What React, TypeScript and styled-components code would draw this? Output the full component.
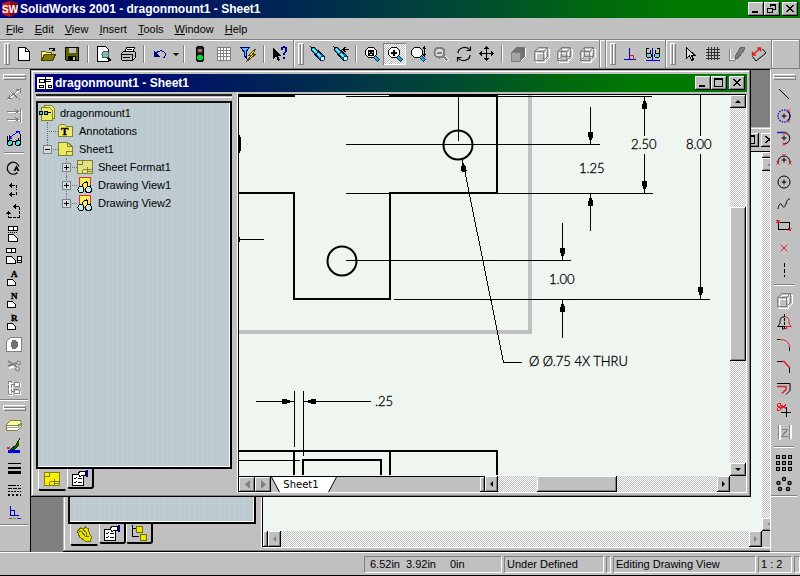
import React from "react";
import type { ReactNode } from "react";
import styled, { createGlobalStyle, css } from "styled-components";

const face = "#c0c0c0";
const paper = "#eff6f0";
const uiFont = `"Liberation Sans", Arial, sans-serif`;

const GlobalStyle = createGlobalStyle`
  *, *::before, *::after { box-sizing: border-box; }
  body { margin: 0; background: ${face}; color: #000; font: 11px/18px ${uiFont}; overflow: hidden; }
  button { font: inherit; color: inherit; padding: 0; margin: 0; border: 0; background: none; border-radius: 0; }
  svg { display: block; flex: none; }
`;

const raised = css`
  background: ${face};
  box-shadow: inset -1px -1px #000, inset 1px 1px #fff, inset -2px -2px #808080;
`;

/* ---------- application frame ---------- */

const Frame = styled.div`
  display: flex;
  flex-direction: column;
  height: 100vh;
  background: ${face};
  border-bottom: 1px solid #000;
`;

const TitleBar = styled.header<{ $inactive?: boolean }>`
  flex: none;
  display: flex;
  align-items: center;
  gap: 2px;
  height: 18px;
  padding: 0 2px;
  color: #fff;
  background: ${(p) =>
    p.$inactive
      ? face
      : "linear-gradient(90deg, #00007c 0%, #00106c 18%, #002a50 38%, #004a34 58%, #00680e 74%, #007a00 86%, #007a00 100%)"};
`;

const TitleText = styled.h1`
  flex: 1;
  margin: 0;
  overflow: hidden;
  white-space: nowrap;
  font: bold 12px/18px "Liberation Sans", Arial, sans-serif;
`;

const WindowButtons = styled.div`
  display: flex;
  margin-left: auto;
  button:last-child { margin-left: 2px; }
`;

const WindowButton = styled.button`
  display: grid;
  place-items: center;
  width: 16px;
  height: 14px;
  ${raised}
`;

const MenuBar = styled.nav`
  flex: none;
  display: flex;
  gap: 11px;
  height: 21px;
  padding: 0 6px;
`;

const MenuItem = styled.button`
  display: block;
  line-height: 20px;
  &::first-letter { text-decoration: underline; }
`;

/* ---------- toolbars ---------- */

const TopBar = styled.div`
  flex: none;
  display: flex;
  height: 30px;
  border-top: 1px solid #808080;
  box-shadow: inset 0 1px #fff;
`;

const Band = styled.div<{ $grow?: boolean; $vertical?: boolean }>`
  display: flex;
  align-items: center;
  flex-grow: ${(p) => (p.$grow ? 1 : 0)};
  border: solid;
  border-color: #fff #808080 #808080 #fff;
  ${(p) =>
    p.$vertical
      ? css`flex-direction: column; border-width: 0 0 1px; padding: 5px 0 0; box-shadow: 0 1px #fff;`
      : css`border-width: 0 1px 1px 0; padding: 0 1px 0 4px; box-shadow: inset 0 -1px ${face}, 1px 0 #fff;`}
`;

const Grip = styled.div<{ $vertical?: boolean }>`
  flex: none;
  border: 1px solid;
  border-color: #fff #808080 #808080 #fff;
  ${(p) =>
    p.$vertical
      ? css`width: 23px; height: 6px; margin-bottom: 3px; background: linear-gradient(#c0c0c0 1px, #808080 1px 2px, #fff 2px 3px, #c0c0c0 3px);`
      : css`width: 6px; height: 22px; margin-right: 2px; background: linear-gradient(90deg, #c0c0c0 1px, #808080 1px 2px, #fff 2px 3px, #c0c0c0 3px);`}
`;

const Divider = styled.div<{ $vertical?: boolean }>`
  flex: none;
  ${(p) =>
    p.$vertical
      ? css`width: 20px; height: 2px; margin: 3px 0; border-top: 1px solid #808080; border-bottom: 1px solid #fff;`
      : css`width: 2px; height: 18px; margin: 0 3px; border-left: 1px solid #808080; border-right: 1px solid #fff;`}
`;

const ditherFill = css`
  background: repeating-conic-gradient(#fff 0 25%, ${face} 0 50%) 0 0 / 2px 2px;
`;

const ToolButton = styled.button<{ $width?: number; $pressed?: boolean }>`
  flex: none;
  display: grid;
  place-items: center start;
  padding-left: 4px;
  width: ${(p) => p.$width ?? 24}px;
  height: 22px;
  ${(p) => p.$pressed && css`${ditherFill} box-shadow: inset 1px 1px #808080, inset -1px -1px #fff;`}
`;

const Middle = styled.div`
  flex: 1;
  min-height: 0;
  display: flex;
`;

const SideBar = styled.aside<{ $right?: boolean }>`
  flex: none;
  width: 30px;
  padding-right: ${(p) => (p.$right ? 3 : 2)}px;
  overflow: hidden;
  border-left: ${(p) => (p.$right ? "1px solid #fff" : "0")};
`;

/* ---------- document windows ---------- */

const Desktop = styled.main`
  flex: 1;
  min-width: 0;
  position: relative;
  overflow: hidden;
  background: #808080;
  border-left: 1px solid #000;
  border-top: 1px solid #000;
`;

const DocWindow = styled.section<{ $back?: boolean }>`
  position: absolute;
  inset: ${(p) => (p.$back ? "57px -13px 0 32px" : "0 19px 55px 0")};
  display: flex;
  flex-direction: column;
  padding: 4px;
  background: ${face};
  box-shadow: inset -1px -1px #000, inset 1px 1px ${face}, inset -2px -2px #808080, inset 2px 2px #fff;
`;

const DocBody = styled.div`
  flex: 1;
  min-height: 0;
  display: flex;
`;

const SidePane = styled.div<{ $width: number }>`
  flex: none;
  display: flex;
  flex-direction: column;
  width: ${(p) => p.$width}px;
  padding: 2px 5px 0 1px;
  border-right: 1px solid #fff;
`;

const SplitBar = styled.div`
  height: 4px;
  margin: 0 0 3px;
  border-top: 2px solid #202020;
  border-bottom: 1px solid #fff;
`;

const TreePanel = styled.div`
  flex: 1;
  min-height: 0;
  overflow: hidden;
  padding: 1px 0 0 1px;
  border: 2px solid;
  border-color: #101010 #000 #000 #101010;
  box-shadow: inset -1px -1px #fff;
  background: repeating-linear-gradient(90deg, #bdcad0 0 4px, #c2ced3 4px 5px);
`;

const PaneTabs = styled.div`
  flex: none;
  display: flex;
  align-items: flex-start;
  height: 24px;
  padding-left: 2px;
`;

const PaneTab = styled.button<{ $active?: boolean }>`
  display: grid;
  place-items: center;
  width: ${(p) => (p.$active ? 29 : 27)}px;
  height: ${(p) => (p.$active ? 22 : 20)}px;
  background: ${face};
  border: solid;
  border-width: 0 2px 2px 1px;
  border-color: ${(p) => (p.$active ? `${face} ${face} #000 #fff` : "#000 #000 #000 #fff")};
  border-radius: 0 0 3px 3px;
`;

const DocPane = styled.div`
  flex: 1;
  min-width: 0;
  display: flex;
  flex-direction: column;
  margin-top: 2px;
  border-top: 1px solid #000;
  border-left: 1px solid #000;
  border-right: 1px solid #fff;
  border-bottom: 1px solid #fff;
`;

const PaneRow = styled.div<{ $grow?: boolean }>`
  display: flex;
  min-height: 0;
  flex: ${(p) => (p.$grow ? "1" : "none")};
`;

const Canvas = styled.div`
  flex: 1;
  min-width: 0;
  overflow: hidden;
  background: ${paper};
`;

const Track = styled.div<{ $vertical?: boolean; $basis?: string }>`
  display: flex;
  flex-direction: ${(p) => (p.$vertical ? "column" : "row")};
  ${(p) => (p.$vertical ? "width: 16px;" : "height: 16px;")}
  flex: ${(p) => p.$basis ?? "none"};
  min-height: 0;
  ${ditherFill}
`;

const ScrollButton = styled.button`
  flex: none;
  display: grid;
  place-items: center;
  min-width: 13px;
  min-height: 13px;
  ${raised}
`;

const Spacer = styled.div<{ $grow: number }>`
  flex: ${(p) => p.$grow} 1 0;
`;

const Thumb = styled.div<{ $grow: number }>`
  flex: ${(p) => p.$grow} 1 0;
  ${raised}
`;

const Corner = styled.div`
  flex: none;
  width: 16px;
  height: 16px;
  background: ${face};
`;

const SheetStrip = styled.div`
  flex: 1 1 0;
  display: flex;
  height: 16px;
  border-top: 1px solid #000;
`;

const NavButton = styled.button`
  display: grid;
  place-items: center;
  width: 16px;
  ${raised}
`;

const tabShape = "polygon(0 0, 100% 0, calc(100% - 8px) 100%, 8px 100%)";

const SheetTab = styled.button`
  position: relative;
  width: 66px;
  font: 10px/15px "DejaVu Sans", sans-serif;
  background: #000;
  clip-path: ${tabShape};
  &::before {
    content: "";
    position: absolute;
    inset: 0 1px;
    background: #fff;
    clip-path: ${tabShape};
  }
  span { position: relative; margin-right: 6px; }
`;

const Splitter = styled.div`
  flex: none;
  width: 5px;
  ${raised}
`;

const SmallSplitter = styled.div`
  flex: none;
  height: 6px;
  ${raised}
`;

/* ---------- tree ---------- */

const TreeList = styled.ul<{ $level: number }>`
  list-style: none;
  margin: 0;
  padding: 0 0 0 ${(p) => [0, 4, 19][p.$level]}px;
`;

const TreeNode = styled.li<{ $root?: boolean }>`
  position: relative;
  ${(p) =>
    !p.$root &&
    css`
      &::before {
        content: "";
        position: absolute;
        left: 4px;
        top: 0;
        bottom: 0;
        border-left: 1px dotted #707070;
      }
      &:last-child::before { bottom: auto; height: 9px; }
    `}
`;

const TreeRow = styled.div<{ $root?: boolean }>`
  position: relative;
  display: flex;
  align-items: center;
  height: 18px;
  white-space: nowrap;
  ${(p) =>
    !p.$root &&
    css`
      &::before {
        content: "";
        position: absolute;
        left: 4px;
        width: 11px;
        top: 9px;
        border-top: 1px dotted #707070;
      }
    `}
`;

const ExpanderSlot = styled.span`
  flex: none;
  position: relative;
  width: 15px;
  display: flex;
`;

const Expander = styled.button`
  display: grid;
  place-items: center;
  width: 9px;
  height: 9px;
  border: 1px solid #808080;
  background: #d4dcdf;
`;

const TreeLabel = styled.span`
  margin-left: 5px;
`;

/* ---------- status bar ---------- */

const StatusBar = styled.footer`
  flex: none;
  display: flex;
  justify-content: flex-end;
  gap: 2px;
  height: 23px;
  padding: 3px 0 2px;
  border-top: 1px solid #fff;
  box-shadow: 0 -1px #808080;
`;

const StatusCell = styled.div<{ $width: number }>`
  flex: none;
  width: ${(p) => p.$width}px;
  padding: 0 2px;
  line-height: 14px;
  overflow: hidden;
  white-space: nowrap;
  border: 1px solid;
  border-color: #808080 #fff #fff #808080;
  &:empty { padding: 0; }
`;

const Coordinates = styled.div`
  display: flex;
  padding-left: 3px;
  gap: 6px;
  span:last-child { margin-left: 8px; }
`;

/* ---------- icons ---------- */

const Glyphs = styled.svg`
  overflow: visible;
`;

const Pix = ({ children, size = 16, smooth }: { children: ReactNode; size?: number; smooth?: boolean }) => (
  <Glyphs
    width={size}
    height={size}
    viewBox={`0 0 ${size} ${size}`}
    fill="none"
    stroke="#000"
    shapeRendering={smooth ? "auto" : "crispEdges"}
    aria-hidden="true"
  >
    {children}
  </Glyphs>
);

const torch = (
  <>
    <path d="M1 1l4 1 9 8 1 3-2 2-3-1-8-9z" fill="#0080c0" />
    <path d="M3 3l8 8" stroke="#60e8f8" strokeWidth="2" />
    <path d="M6 8l3-3M10 14l4-4" />
    <circle cx="12.5" cy="12.5" r="2" fill="#e0ffff" stroke="#004080" />
  </>
);

const lens = (
  <>
    <path d="M10 10l5 5" stroke="#003060" strokeWidth="3.5" />
    <path d="M10.500 10.500l4 4" stroke="#20a8e0" strokeWidth="2" />
    <circle cx="7" cy="6.500" r="5.500" fill="#fff" />
  </>
);

const cube = (color: string, hidden: boolean) => (
  <>
    <path d="M2 6v9h9V6zM2 6l4-4h9v9l-4 4M11 6l4-4" stroke="#fff" transform="translate(1 1)" />
    <path d="M1.500 5.500v9h9v-9zl4-4h9v9l-4 4M10.500 5.500l4-4" stroke={color} />
    {hidden && <path d="M5.500 1.500v9h9M5.500 10.500l-4 4" stroke={color} />}
  </>
);

const lettered = (letter: string) => (
  <Pix>
    <path d="M1.500 9.500h5l3 3v3h-8z" fill="#fff" />
    <text x="5" y="7" fontFamily="Liberation Serif, serif" fontWeight="bold" fontSize="9" fill="#000" strokeWidth="0.4">
      {letter}
    </text>
  </Pix>
);

const redX = (x: number, y: number) => <path d={`M${x - 1.5} ${y - 1.5}l3 3m0-3l-3 3`} stroke="#e02020" />;
const plus = <path d="M8 5.500v5M5.500 8h5" />;

const glasses = (y: number) => (
  <g transform={`translate(0 ${y})`}>
    <path d="M2 3L4-2M14 3l-2-5M6 2l2-1 2 1" />
    <circle cx="4" cy="3" r="2.500" fill="#40e0e0" />
    <circle cx="12" cy="3" r="2.500" fill="#40e0e0" />
  </g>
);

const icons = {
  newDoc: <Pix><path d="M2.500 1.500h7l4 4v9h-11z" fill="#fff" /><path d="M9.500 1.500v4h4" /></Pix>,
  open: (
    <Pix>
      <path d="M1.500 14.500v-9h4l1 1h5v2" fill="#ffff90" stroke="#606000" />
      <path d="M1.500 14.500l3-6h11l-3 6z" fill="#808000" stroke="#404000" />
      <path d="M9 3.500c1-2 4-2 5 .500M14.500 1.500v3h-3" />
    </Pix>
  ),
  save: (
    <Pix>
      <path d="M1.500 1.500h13v13h-12l-1-1z" fill="#606000" />
      <path d="M4.500 2h7v5h-7z" fill={face} stroke="none" />
      <path d="M4 10h8v4H4z" fill="#000" stroke="none" /><path d="M9 11h2v3H9z" fill={face} stroke="none" />
    </Pix>
  ),
  preview: (
    <Pix>
      <path d="M1.500 .500h8l3 3v12h-11z" fill="#fff" />
      <path d="M11 11l4 4" strokeWidth="2" /><circle cx="9.500" cy="8.500" r="3.500" fill="#80b8b8" stroke="#406868" />
    </Pix>
  ),
  print: (
    <Pix>
      <path d="M4.500 6.500l2-5h8l-2 5" fill="#fff" />
      <path d="M1.500 7.500l2-2h11l1 1v5l-3 3h-10l-1-1z" fill={face} />
      <path d="M1.500 8.500h11v5M7 3.500h5M3 11.500h7" /><path d="M9 10.500h2" stroke="#c0c000" />
    </Pix>
  ),
  undo: <Pix><path d="M4 8c2-4 7-4 9-1 1 2 0 4-2 5" stroke="#000080" /><path d="M2 5v6h6z" fill="#000080" stroke="none" /></Pix>,
  light: (
    <Pix>
      <rect x="4.500" y=".5" width="7" height="15" rx="2" fill="#202020" />
      <circle cx="8" cy="4.500" r="2" fill="#a07070" stroke="none" /><circle cx="8" cy="11.500" r="2.800" fill="#00e030" stroke="none" />
    </Pix>
  ),
  grid: (
    <Pix>
      <path d="M1 1h14v14H1z" fill="#fff" stroke="none" />
      <path d="M1.500 1.500h13v13h-13zM4.500 2v12M7.500 2v12M10.500 2v12M2 4.500h12M2 7.500h12M2 10.500h12" stroke="#808080" />
    </Pix>
  ),
  filter: (
    <Pix>
      <path d="M.500 1.500h9l-3.500 4v6l-2-2v-4z" fill="#50c8ff" stroke="#000080" />
      <path d="M14.500 3.500l-6 6h3l-5 6 9-7h-3l3-5z" fill="#ffe800" stroke="#504000" />
    </Pix>
  ),
  help: (
    <Pix>
      <path d="M1 2v11l3-3 2 5 2-1-2-4h4z" fill="#000" stroke="none" />
      <path d="M9.500 4c0-4 5.500-3 5 0 0 2-2.500 2-2.500 5M12 11v2" stroke="#000080" strokeWidth="2" />
    </Pix>
  ),
  torch: <Pix>{torch}</Pix>,
  torchBack: <Pix>{torch}<path d="M10 3.500h6M12.500 1L10 3.500 12.500 6" /></Pix>,
  zoomFit: <Pix>{lens}<path d="M4.500 4h5v5h-5zM4.500 4l5 5M9.500 4l-5 5" /></Pix>,
  zoomArea: <Pix>{lens}<path d="M7 3.500v6M4 6.500h6" strokeWidth="2" /></Pix>,
  zoomInOut: <Pix>{lens}<path d="M14.500 1v9M13 3l1.500-2L16 3M13 8l1.500 2L16 8" /></Pix>,
  zoomSelection: (
    <Pix>
      <path d="M11 11l4 4" stroke="#fff" strokeWidth="3" /><path d="M10 10l4.500 4.500" stroke="#808080" strokeWidth="2" />
      <circle cx="6.500" cy="6.500" r="5" fill="#d8d8d8" stroke="#808080" strokeWidth="2" /><path d="M4 6.500h5" stroke="#808080" strokeWidth="2" />
    </Pix>
  ),
  rotate: <Pix smooth><path d="M2 7c0-5 8-8 12-3M14 9c0 5-8 8-12 3M14.500 .500v4h-4M1.500 15.500v-4h4" strokeWidth="1.200" /></Pix>,
  pan: (
    <Pix>
      <path d="M7.500 2v12M2 7.500h12" />
      <path d="M7.500 0l3 3h-6zM7.500 15l3-3h-6zM0 7.500l3-3v6zM15 7.500l-3-3v6z" fill="#000" stroke="none" />
    </Pix>
  ),
  shaded: (
    <Pix>
      <path d="M1 6l5-5h9v9l-5 6" fill="#707070" stroke="none" /><path d="M1 6h9v9H1z" fill="#a4a4a4" stroke="#808080" />
      <path d="M10.500 15.500l5-5v-9" stroke="#fff" />
    </Pix>
  ),
  cube: <Pix>{cube("#808080", false)}</Pix>,
  cubeHidden: <Pix>{cube("#808080", true)}</Pix>,
  perp: <Pix><path d="M2 13.500h12M7.500 2v11" stroke="#0000e0" /><path d="M8 9.500h3.500v4" stroke="#e02020" /></Pix>,
  relations: (
    <Pix>
      <path d="M1 14.500h14M7.500 2v12" stroke="#0000e0" />
      <path d="M1.500 9V3l2-1M5.500 7V4M14.500 9V3l-2-1M10.500 7V4" />
      <circle cx="4" cy="9.500" r="2.500" fill="#60d8d8" /><circle cx="12" cy="9.500" r="2.500" fill="#60d8d8" />
    </Pix>
  ),
  select: <Pix><path d="M4.500 1.500v11l3-3 2 5 2-1-2-4h3.500z" fill="#d8d8d8" /></Pix>,
  gridDark: (
    <Pix>
      <path d="M3.500 1v13M6.500 1v13M9.500 1v13M12.500 1v13M1 3.500h14M1 6.500h14M1 9.500h14M1 12.500h14" stroke="#303030" />
    </Pix>
  ),
  sketch: (
    <Pix>
      <path d="M1.500 3v11.500h5" stroke="#808080" /><path d="M2.500 3v10.500h5" stroke="#fff" />
      <path d="M7 14l1-5 5-8h3v3l-5 7z" fill="#808080" stroke="#606060" />
    </Pix>
  ),
  dimension: (
    <Pix smooth>
      <path d="M5 15l10-8M11.500 3l3.500 4M1.500 10.500L5 15" />
      <path d="M1.500 9l8-7M1.500 5.500V9H5M6 2h3.500v3.500" stroke="#e02020" strokeWidth="1.500" />
    </Pix>
  ),
  dimDisabled: (
    <Pix>
      <path d="M1 15L15 3M3 5l11 9" stroke="#fff" /><path d="M0 14L15 2M4 5l10 9M3 9v3h3M10 3h4v4" stroke="#808080" />
    </Pix>
  ),
  baseDisabled: (
    <Pix>
      <path d="M2 4.500h12M2 12.500h12M15.500 2v13" stroke="#fff" />
      <path d="M1 3.500h11M1 11.500h11M9 1l3 2.500L9 6M9 9l3 2.500L9 14M14.500 1v13" stroke="#808080" />
    </Pix>
  ),
  modelItems: (
    <Pix>
      <path d="M3 8l10-7M3 5v3h3M10 1h3v3" stroke="#0000d0" />
      {glasses(10)}
      <path d="M1.500 11V6M14.500 11V4" />
    </Pix>
  ),
  datum: (
    <Pix smooth>
      <path d="M11.500 12.500a6 6 0 1 1 1.500-6" strokeWidth="1.200" />
      <path d="M7.500 11l3-6 3 6h-2l-1-2-1 2z" fill="#000" stroke="none" />
    </Pix>
  ),
  ordinate: (
    <Pix>
      <path d="M6 3.500h4.500v4M10.500 10v2.500H6" strokeDasharray="3 1" />
      <path d="M6 1v5L3 3.500zM6 10v5l-3-2.500z" fill="#000" stroke="none" />
    </Pix>
  ),
  ordinate2: (
    <Pix>
      <path d="M10 2.500h3.500v11M2.500 8v5.500M3 13.500h10" strokeDasharray="3 1" />
      <path d="M10 0v5L7 2.500zM2.500 7l3 3h-6z" fill="#000" stroke="none" />
    </Pix>
  ),
  view1: <Pix><path d="M2.500 .500h9v4h-9zM7.500 .500v4" fill="#fff" /><path d="M2 6.500h10" strokeDasharray="1 1" /><path d="M2.500 8.500h5l4 4v2.500h-9z" fill="#fff" /></Pix>,
  view2: <Pix><path d="M.500 .500h9v4h-9zM5.500 .500v4M.500 8.500h5l4 4v2.500h-9zM11.500 8.500h4v6h-4zM11.500 12.500h4" fill="#fff" /></Pix>,
  viewA: lettered("A"),
  viewN: lettered("N"),
  viewR: lettered("R"),
  detail: (
    <Pix>
      <path d="M.500 5.500l4-4h11v14h-15z" fill="#fff" stroke="#808080" /><ellipse cx="8.500" cy="8.500" rx="3.500" ry="5" fill="#707070" stroke="none" />
    </Pix>
  ),
  cut: (
    <Pix smooth>
      <path d="M3 4l9 6M3 10l9-3" stroke="#fff" strokeWidth="2" /><path d="M2 3l9 6M2 8l9-3" stroke="#808080" strokeWidth="2" />
      <circle cx="12.500" cy="5" r="2" stroke="#808080" /><circle cx="11.500" cy="11" r="2" stroke="#808080" />
    </Pix>
  ),
  align: (
    <Pix>
      <path d="M3 2h4v14H3zM9 3h6v4H9zM9 11h6v4H9z" fill="#fff" stroke="none" />
      <path d="M2.500 1.500h3v13h-3zM5.500 4.500h3M8.500 2.500h5v4h-5zM5.500 11.500h3M8.500 9.500h5v4h-5z" stroke="#808080" strokeDasharray="4 1" />
    </Pix>
  ),
  layer: (
    <Pix>
      <path d="M.500 7.500l4-4h10l1 3v3l-4 4h-11z" fill="#fff" stroke="#808040" />
      <path d="M.500 7.500l4-4h10l1 3-4 2H.500z" fill="#ffffa0" stroke="#808040" /><path d="M1 10.500h11l3-3" stroke="#a0a0a0" />
    </Pix>
  ),
  lineColor: (
    <Pix>
      <path d="M2 11h12v3H2z" fill="#0000e0" stroke="none" /><path d="M13 1v5l-4 4H5l5-4z" fill="#106010" stroke="#003000" />
      <path d="M13.500 1v5" stroke="#e0e000" /><path d="M1 8h3v2H1z" fill="#e02040" stroke="none" />
    </Pix>
  ),
  thickness: <Pix><path d="M2 2.500h13" /><path d="M2 7h13" strokeWidth="2" /><path d="M2 11.500h13" strokeWidth="3" /></Pix>,
  lineStyle: (
    <Pix>
      <path d="M2 2.500h13" strokeDasharray="8 1 2 1" /><path d="M2 5.500h13" strokeDasharray="4 1" />
      <path d="M2 8.500h13" strokeDasharray="2 1" /><path d="M2 12h13" strokeWidth="2" strokeDasharray="2 2" />
    </Pix>
  ),
  edgeColor: <Pix><path d="M4.500 1v9.500h8M4.500 5.500h4v5" stroke="#0000d0" /><path d="M3 13.500h3" stroke="#e02020" /><path d="M7 13.500h3" stroke="#20c020" /><path d="M11 13.500h4" stroke="#2020e0" /></Pix>,
  line: <Pix smooth><path d="M3 3l10 10" /></Pix>,
  arcCenter: <Pix smooth><circle cx="8" cy="8" r="6" stroke="#2020e0" strokeWidth="1.500" strokeDasharray="1.500 1" /><path d="M12 3.500a6 6 0 010 9" />{plus}{redX(12.500, 3)}{redX(12.500, 13)}</Pix>,
  arcTangent: <Pix smooth><path d="M1 2.500h8" stroke="#2020e0" strokeWidth="1.500" /><path d="M8 2.500a5.500 5.500 0 010 11.500" />{plus}{redX(8.500, 3)}{redX(8, 14)}</Pix>,
  arc3: <Pix smooth><path d="M2 10a6 6 0 0112 0" />{plus}{redX(2, 11)}{redX(14, 11)}{redX(8, 3.500)}</Pix>,
  circle: <Pix smooth><circle cx="8" cy="8" r="6" />{plus}</Pix>,
  spline: <Pix smooth><path d="M2 13c1-6 3-6 4-4s2 4 4-1c1-4 2-5 4-5" /></Pix>,
  rectangle: <Pix><path d="M2.500 4.500h11v7h-11z" />{redX(2, 3.500)}{redX(14, 12)}</Pix>,
  point: <Pix smooth><path d="M4.500 4.500l7 7m0-7l-7 7" stroke="#e02020" /></Pix>,
  centerline: <Pix><path d="M8.500 1v14" strokeDasharray="4 2" /></Pix>,
  mirror: (
    <Pix smooth>
      <path d="M8 3c-4 0-4 3-4 5 0 2-1 3-2.500 4.500H8M6.500 13v2H8" />
      <path d="M9 3c4 0 4 3 4 5 0 2 1 3 2.500 4.500H9M10.500 13v2H9" stroke="#e02020" />
      <path d="M8.500 0v16" strokeDasharray="3 1" />
    </Pix>
  ),
  fillet: <Pix smooth><path d="M1 3.500h3M13.500 11v4" /><path d="M4 3.500c6 0 9.500 3 9.500 8" stroke="#e02020" /></Pix>,
  chamfer: <Pix smooth><path d="M1 3.500h6M13.500 9v6" /><path d="M6 3.500h2l5.500 6" stroke="#e02020" strokeWidth="1.500" /></Pix>,
  offset: <Pix smooth><path d="M1 3.500h13v7l-4 4" /><path d="M1 6.500h9v3l-4 4" stroke="#e02020" strokeWidth="1.500" /></Pix>,
  trim: (
    <Pix>
      <path d="M10.500 5v10M5 10.500h10" strokeWidth="1" /><path d="M4 3l6 3M4 7l6-4" stroke="#e02020" strokeWidth="1.500" />
      <circle cx="3" cy="3" r="1.500" stroke="#e02020" /><circle cx="3" cy="7" r="1.500" stroke="#e02020" />
    </Pix>
  ),
  construction: (
    <Pix>
      <path d="M4 1v15M15 1v14" stroke="#fff" strokeWidth="2" /><path d="M2.500 1v14M13.500 1v14M6 5h6l-6 7h6" stroke="#808080" />
    </Pix>
  ),
  linearPattern: (
    <Pix>
      {[1.5, 7.5, 13.5].map((y) => [1.5, 7.5, 13.5].map((x) => <rect key={`${x}-${y}`} x={x - 1} y={y} width="3" height="3" fill="#909090" />))}
    </Pix>
  ),
  circularPattern: (
    <Pix smooth>
      {[[8, 3], [2.5, 7], [13.5, 7], [4, 13], [12, 13]].map(([x, y]) => <circle key={`${x}-${y}`} cx={x} cy={y} r="1.600" fill="#909090" strokeWidth="1.300" />)}
    </Pix>
  ),
  properties: (
    <Pix>
      <path d="M.500 4.500h11v11H.500z" fill="#fff" /><path d="M2 8l1 1 2-2M2 12l1 1 2-2M6 8.500h4M6 12.500h4" />
      <path d="M6 3l3-2h4v4h-3l-2 2z" fill="#fff" /><path d="M15 0v7" stroke="#000080" strokeWidth="2" />
    </Pix>
  ),
  sheetFormat: (
    <Pix>
      <path d="M.500 1.500h15v13H.500z" fill="#f8f000" stroke="#808020" /><path d="M1 5.500h4v-4M5.500 10.500h10M5.500 10.500v4M10.500 8v6M10 12.500h5" stroke="#807800" />
    </Pix>
  ),
  part: (
    <Pix>
      <path d="M1.500 5l3-3 3 1 2-2 3 2 1 5 2 3-1 4-4 1-4-3-3-2z" fill="#e8e000" stroke="#707000" />
      <path d="M3 5l3 1 3 4 4 1M7 4l3 2 1 4" stroke="#707000" />
    </Pix>
  ),
  config: (
    <Pix>
      <path d="M1.500 0v11.500h6M1.500 3.500h4" /><path d="M5.500 1.500h6v6h-6zM9 9.500h6v6H9z" fill="#f0e800" stroke="#707000" />
    </Pix>
  ),
  docTitle: (
    <Pix>
      <path d="M0 2h16v12H0z" fill="#fff" stroke="none" /><path d="M2 4.500h5v3H2zM9 4.500h5M9 6.500h5M2 10.500h4v2H2zM8.500 2v12M11 10.500h3v2h-3z" />
    </Pix>
  ),
  treeRoot: (
    <Pix>
      <path d="M5.500 .500h7l3 3v10h-10z" fill="#f4f080" stroke="#808020" /><path d="M2.500 2.500h8l3 3v10h-11z" fill="#ece860" stroke="#808020" />
      <circle cx="2" cy="8" r="2" fill="#40c8c8" /><circle cx="7" cy="8" r="2" fill="#40c8c8" /><path d="M9 7.500h3" />
    </Pix>
  ),
  annotations: (
    <Pix>
      <path d="M.500 13.500v-10l2-2h4l2 2h6v10z" fill="#f0ec70" stroke="#808040" />
      <text x="3" y="12" fontFamily="Liberation Serif, serif" fontWeight="bold" fontSize="11" fill="#000" strokeWidth="0.4">T</text>
    </Pix>
  ),
  sheet: <Pix><path d="M.500 1.500h9l5 4v9H.500z" fill="#ece860" stroke="#808040" /><path d="M9.500 1.500v4h5M8.500 14v-4h6" stroke="#808040" /></Pix>,
  format: <Pix><path d="M.500 1.500h15v13H.500z" fill="#e4e280" stroke="#808040" /><path d="M1 5.500h4v-4M5.500 10.500h10M5.500 10.500v4M10.500 8v6M10 12.500h5" stroke="#808040" /></Pix>,
  view: (
    <Pix>
      <path d="M2.500 .500h11v12h-11z" fill="#fcec60" stroke="#e03020" /><path d="M5 9c1-4 5-5 6-3l-1 3M2 9l2 2M13 8l1 3" />
      <circle cx="4" cy="12.500" r="3" fill="#c0f0f0" /><circle cx="11.500" cy="12.500" r="3" fill="#c0f0f0" />
    </Pix>
  ),
};

type IconName = keyof typeof icons;

const Tool = ({ icon, width, pressed }: { icon: IconName; width?: number; pressed?: boolean }) => (
  <ToolButton aria-label={icon} $width={width} $pressed={pressed}>{icons[icon]}</ToolButton>
);

const Tools = ({ names, width }: { names: IconName[]; width?: number }) => (
  <>{names.map((n, i) => <Tool key={n + i} icon={n} width={width} pressed={n === "zoomArea"} />)}</>
);

const arrowPaths = { up: "M0 4h7L3.500 0z", down: "M0 0h7L3.500 4z", left: "M4 0v7L0 3.500z", right: "M0 0v7l4-3.500z" };

const Arrow = ({ dir, color = "#000", big }: { dir: keyof typeof arrowPaths; color?: string; big?: boolean }) => {
  const upright = dir === "up" || dir === "down";
  const long = big ? 9 : 6;
  const short = big ? 5 : 3;
  return (
    <svg
      width={upright ? long : short}
      height={upright ? short : long}
      viewBox={upright ? "0 0 7 4" : "0 0 4 7"}
      preserveAspectRatio="none"
      aria-hidden="true"
    >
      <path d={arrowPaths[dir]} fill={color} />
    </svg>
  );
};

const DropButton = styled.button`
  display: grid;
  place-items: center;
  width: 8px;
`;

const SystemButtons = ({ restore }: { restore?: boolean }) => (
  <WindowButtons>
    <WindowButton aria-label="Minimize"><Pix size={10}><path d="M1 8h6" strokeWidth="2" /></Pix></WindowButton>
    <WindowButton aria-label={restore ? "Restore" : "Maximize"}>
      <Pix size={10}>
        {restore ? <path d="M3.500 3V.500h5v5H6M3 1h6M.500 4.500h5v4h-5zM0 4h6" /> : <path d="M.500 .500h8v8h-8zM0 1.500h9" />}
      </Pix>
    </WindowButton>
    <WindowButton aria-label="Close"><Pix size={10}><path d="M1 1l7 7M2 1l7 7M8 1L1 8M9 1L2 8" /></Pix></WindowButton>
  </WindowButtons>
);

/* ---------- drawing sheet ---------- */

const DimText = styled.text`
  font: 300 13px Lato, "Liberation Sans", sans-serif;
  fill: #000;
  stroke: #000;
  stroke-width: 0.3px;
`;

const Head = ({ x, y, angle }: { x: number; y: number; angle: number }) => (
  <path d="M0 0l1.500 6 1 1v5h-5v-5l1-1z" fill="#000" stroke="none" transform={`translate(${x} ${y}) rotate(${angle})`} />
);

const Sheet = () => (
  <svg width="490" height="380" viewBox="239 95 490 380" fill="none" stroke="#000" shapeRendering="crispEdges" role="img" aria-label="Drawing sheet">
    <path d="M530 95v237H239" stroke={face} strokeWidth="4" />
    <g strokeWidth="2">
      <path d="M239 96h56M389 96h108v97H390v106h-96V193h-55" />
      <path d="M239 451h258v24M294 451v24M390 451v24M303 475v-15h78v15" />
      <circle cx="458" cy="145" r="14.500" shapeRendering="auto" />
      <circle cx="342" cy="261" r="14.500" shapeRendering="auto" />
    </g>
    <path d="M239 135h1l1 4v10l-1 4h-1z" fill="#000" stroke="none" />
    <path d="M346 96.500h306M346 193.500h307M346 144.500h254M458.500 96v45M239 239.500h25M239.500 237v5M346 260.500h225M394 299.500h316" />
    <path d="M239 460.500h61M294.500 391v56M303.500 391v65M256 401.500h37M303 401.500h68" />
    <path d="M590.500 107v37M590.500 193v38M562.500 223v37M562.500 299v39M644.500 97v39M644.500 154v39M700.500 95v41M700.500 154v145" />
    <path d="M462.500 160l41 202h18.500" />
    <Head x={462} y={160} angle={-11} />
    <Head x={590.5} y={144} angle={180} />
    <Head x={590.5} y={194} angle={0} />
    <Head x={562.5} y={260} angle={180} />
    <Head x={562.5} y={300} angle={0} />
    <Head x={644.5} y={97} angle={0} />
    <Head x={644.5} y={193} angle={180} />
    <Head x={700.5} y={299} angle={180} />
    <Head x={293.5} y={401.5} angle={90} />
    <Head x={304} y={401.5} angle={-90} />
    <DimText x="631" y="149">2.50</DimText>
    <DimText x="686" y="149">8.00</DimText>
    <DimText x="579" y="173">1.25</DimText>
    <DimText x="549" y="284">1.00</DimText>
    <DimText x="375" y="406">.25</DimText>
    <DimText x="529" y="366">Ø Ø.75 4X THRU</DimText>
  </svg>
);

/* ---------- feature tree ---------- */

type Item = { label: string; icon: IconName; mark?: "+" | "-"; children?: Item[] };

const tree: Item[] = [
  {
    label: "dragonmount1",
    icon: "treeRoot",
    children: [
      { label: "Annotations", icon: "annotations" },
      {
        label: "Sheet1",
        icon: "sheet",
        mark: "-",
        children: [
          { label: "Sheet Format1", icon: "format", mark: "+" },
          { label: "Drawing View1", icon: "view", mark: "+" },
          { label: "Drawing View2", icon: "view", mark: "+" },
        ],
      },
    ],
  },
];

const Tree = ({ items, level = 0 }: { items: Item[]; level?: number }) => (
  <TreeList $level={level}>
    {items.map((item) => (
      <TreeNode key={item.label} $root={level === 0}>
        <TreeRow $root={level === 0}>
          {level > 0 && (
            <ExpanderSlot>
              {item.mark && (
                <Expander aria-label={item.mark === "+" ? "Expand" : "Collapse"}>
                  <Pix size={7}><path d={item.mark === "+" ? "M1 3.500h5M3.500 1v5" : "M1 3.500h5"} /></Pix>
                </Expander>
              )}
            </ExpanderSlot>
          )}
          {icons[item.icon]}
          <TreeLabel>{item.label}</TreeLabel>
        </TreeRow>
        {item.children && <Tree items={item.children} level={level + 1} />}
      </TreeNode>
    ))}
  </TreeList>
);

/* ---------- windows ---------- */

const BackWindow = () => (
  <DocWindow $back>
    <TitleBar $inactive><SystemButtons /></TitleBar>
    <DocBody>
      <SidePane $width={195}>
        <SplitBar />
        <TreePanel />
        <PaneTabs>
          <PaneTab $active aria-label="Features">{icons.part}</PaneTab>
          <PaneTab aria-label="Properties">{icons.properties}</PaneTab>
          <PaneTab aria-label="Configurations">{icons.config}</PaneTab>
        </PaneTabs>
      </SidePane>
      <DocPane>
        <PaneRow $grow>
          <Canvas />
          <Track $vertical>
            <SmallSplitter />
            <ScrollButton aria-label="Scroll up"><Arrow dir="up" color="#808080" /></ScrollButton>
            <Spacer $grow={1} />
            <ScrollButton aria-label="Scroll down"><Arrow dir="down" color="#808080" /></ScrollButton>
          </Track>
        </PaneRow>
        <PaneRow>
          <Track $basis="1">
            <Splitter />
            <ScrollButton aria-label="Scroll left"><Arrow dir="left" color="#808080" /></ScrollButton>
            <Spacer $grow={1} />
            <ScrollButton aria-label="Scroll right"><Arrow dir="right" color="#808080" /></ScrollButton>
          </Track>
          <Corner />
        </PaneRow>
      </DocPane>
    </DocBody>
  </DocWindow>
);

const FrontWindow = () => (
  <DocWindow>
    <TitleBar>
      {icons.docTitle}
      <TitleText as="h2">dragonmount1 - Sheet1</TitleText>
      <SystemButtons />
    </TitleBar>
    <DocBody>
      <SidePane $width={203}>
        <SplitBar />
        <TreePanel><Tree items={tree} /></TreePanel>
        <PaneTabs>
          <PaneTab $active aria-label="Drawing tree">{icons.sheetFormat}</PaneTab>
          <PaneTab aria-label="Properties">{icons.properties}</PaneTab>
        </PaneTabs>
      </SidePane>
      <DocPane>
        <PaneRow $grow>
          <Canvas><Sheet /></Canvas>
          <Track $vertical>
            <ScrollButton aria-label="Scroll up"><Arrow dir="up" /></ScrollButton>
            <Spacer $grow={99} />
            <Thumb $grow={154} />
            <Spacer $grow={102} />
            <ScrollButton aria-label="Scroll down"><Arrow dir="down" /></ScrollButton>
          </Track>
        </PaneRow>
        <PaneRow>
          <SheetStrip>
            <NavButton aria-label="Previous sheet"><Arrow dir="left" color="#808080" big /></NavButton>
            <NavButton aria-label="Next sheet"><Arrow dir="right" color="#808080" big /></NavButton>
            <SheetTab><span>Sheet1</span></SheetTab>
            <Spacer $grow={1} />
            <Splitter />
          </SheetStrip>
          <Track $basis="1 1 0">
            <ScrollButton aria-label="Scroll left"><Arrow dir="left" /></ScrollButton>
            <Spacer $grow={40} />
            <Thumb $grow={80} />
            <Spacer $grow={100} />
            <ScrollButton aria-label="Scroll right"><Arrow dir="right" /></ScrollButton>
          </Track>
          <Corner />
        </PaneRow>
      </DocPane>
    </DocBody>
  </DocWindow>
);

export default function App() {
  return (
    <Frame>
      <GlobalStyle />
      <TitleBar>
        <svg width="16" height="16" viewBox="0 0 16 16" aria-hidden="true">
          <path d="M0 2l8-2 8 2v9l-8 5-8-3z" fill="#c01820" />
          <path d="M8 0l8 2v9l-8 5z" fill="#801018" />
          <text x="0" y="12" fontFamily="Liberation Sans" fontWeight="bold" fontSize="10" fill="#fff">SW</text>
        </svg>
        <TitleText>SolidWorks 2001 - dragonmount1 - Sheet1</TitleText>
        <SystemButtons restore />
      </TitleBar>
      <MenuBar>
        {["File", "Edit", "View", "Insert", "Tools", "Window", "Help"].map((m) => <MenuItem key={m}>{m}</MenuItem>)}
      </MenuBar>
      <TopBar>
        <Band>
          <Grip />
          <Tools names={["newDoc", "open", "save"]} />
          <Divider />
          <Tools names={["preview", "print"]} />
          <Divider />
          <Tool icon="undo" />
          <DropButton aria-label="Undo list"><Arrow dir="down" /></DropButton>
          <Divider />
          <Tools names={["light", "grid", "filter"]} />
          <Divider />
          <Tool icon="help" />
        </Band>
        <Band>
          <Grip />
          <Tools names={["torch", "torchBack"]} width={23} />
          <Divider />
          <Tools names={["zoomFit", "zoomArea", "zoomInOut", "zoomSelection", "rotate", "pan"]} width={23} />
          <Divider />
          <Tools names={["shaded", "cube", "cubeHidden", "cubeHidden"]} width={23} />
        </Band>
        <Band />
        <Band>
          <Grip />
          <Tools names={["perp", "relations"]} width={23} />
        </Band>
        <Band>
          <Grip />
          <Tools names={["select", "gridDark", "sketch", "dimension"]} width={23} />
        </Band>
        <Band $grow />
      </TopBar>
      <Middle>
        <SideBar>
          <Band $vertical>
            <Grip $vertical />
            <Tools names={["dimDisabled", "baseDisabled", "modelItems"]} />
            <Divider $vertical />
            <Tools names={["datum", "ordinate", "ordinate2", "view1", "view2", "viewA", "viewN", "viewR", "detail", "cut", "align"]} />
          </Band>
          <Band $vertical>
            <Grip $vertical />
            <Tools names={["layer", "lineColor", "thickness", "lineStyle", "edgeColor"]} />
          </Band>
        </SideBar>
        <Desktop>
          <BackWindow />
          <FrontWindow />
        </Desktop>
        <SideBar $right>
          <Band $vertical>
            <Grip $vertical />
            <Tools names={["line", "arcCenter", "arcTangent", "arc3", "circle", "spline", "rectangle", "point", "centerline"]} />
            <Divider $vertical />
            <Tools names={["cube", "mirror", "fillet", "chamfer", "offset", "trim", "construction"]} />
            <Divider $vertical />
            <Tools names={["linearPattern", "circularPattern"]} />
          </Band>
        </SideBar>
      </Middle>
      <StatusBar>
        <StatusCell $width={138}>
          <Coordinates><span>6.52in</span><span>3.92in</span><span>0in</span></Coordinates>
        </StatusCell>
        <StatusCell $width={100}>Under Defined</StatusCell>
        <StatusCell $width={5} />
        <StatusCell $width={143}>Editing Drawing View</StatusCell>
        <StatusCell $width={34}>1 : 2</StatusCell>
        <StatusCell $width={6} />
      </StatusBar>
    </Frame>
  );
}
